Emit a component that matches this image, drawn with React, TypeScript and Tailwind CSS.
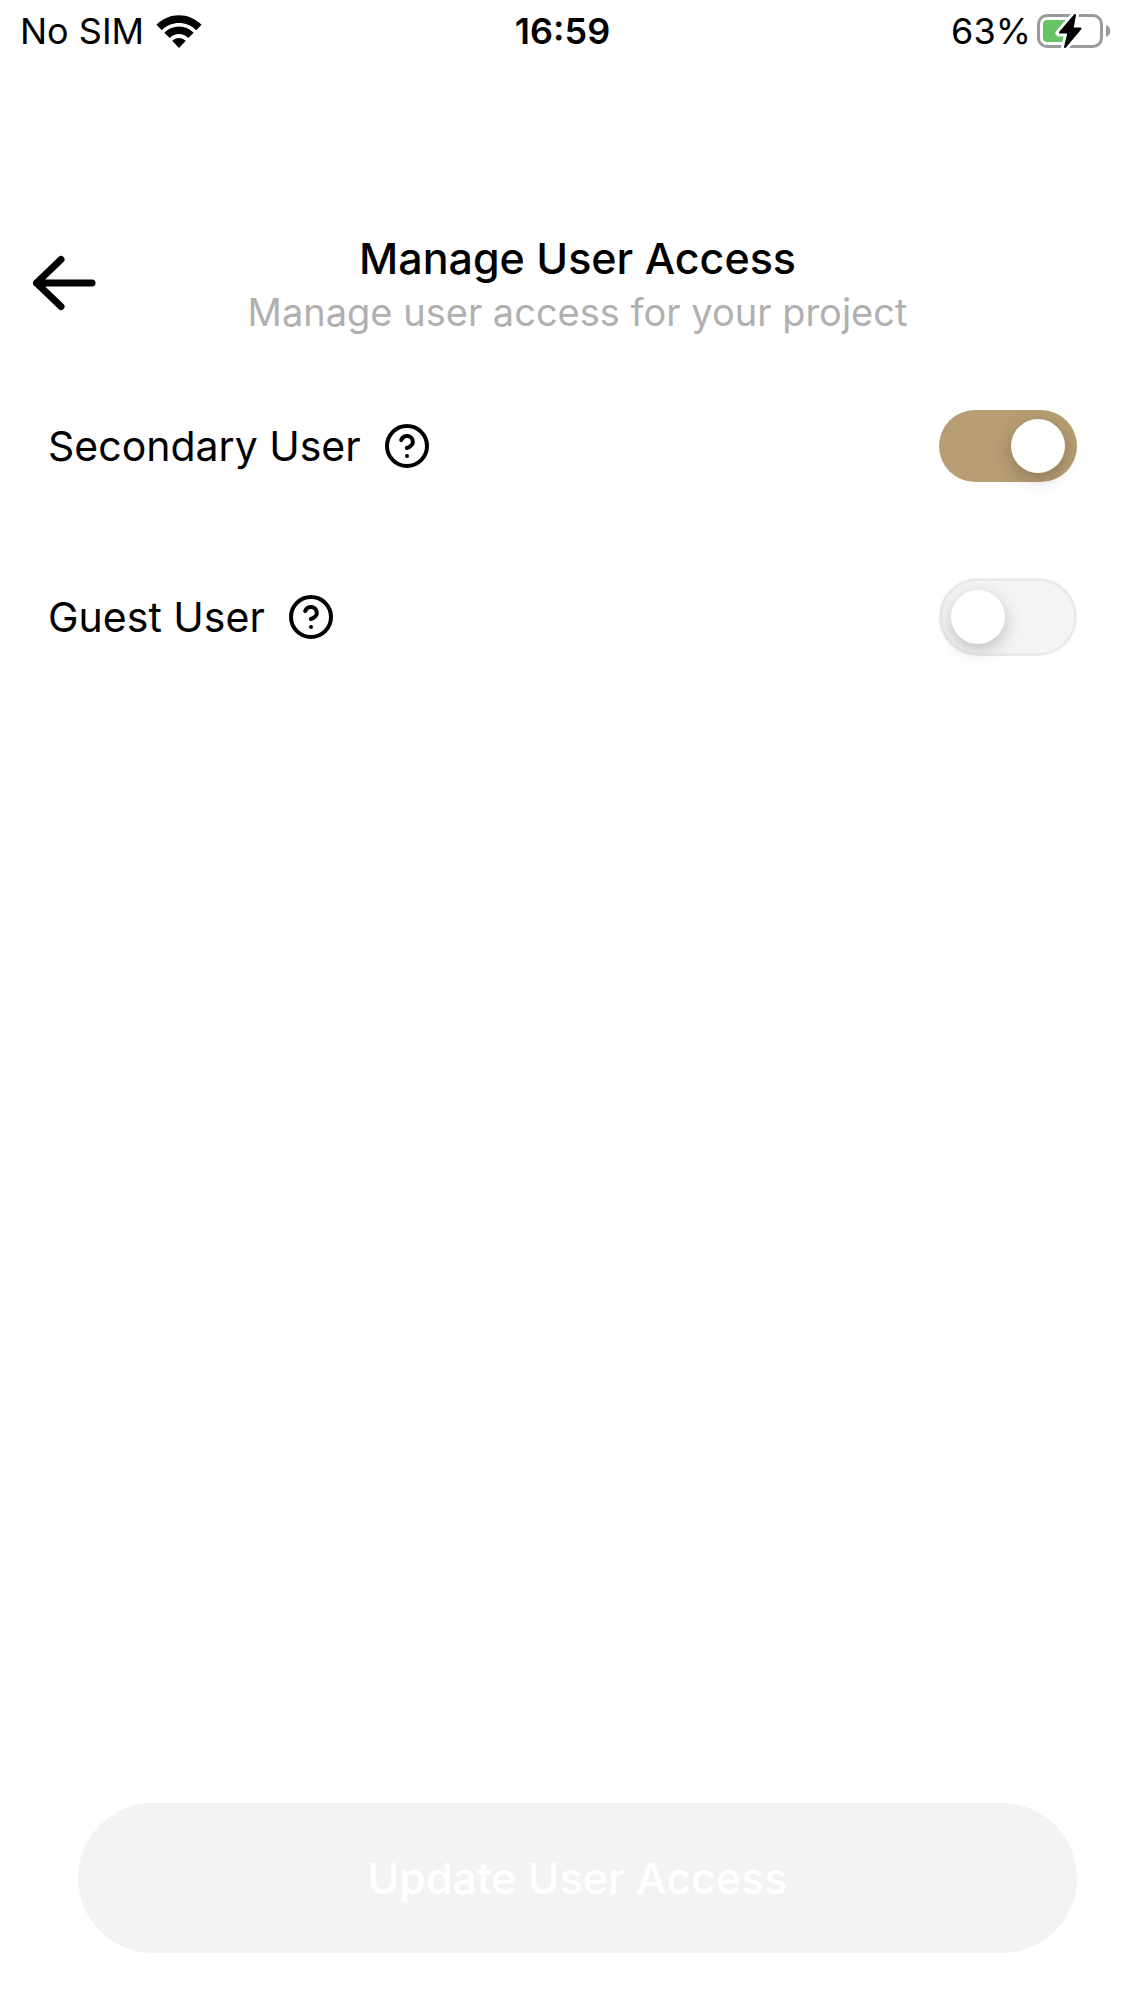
import { useState } from "react";
import { CircleQuestionMark } from "lucide-react";

function WifiIcon() {
  return (
    <svg viewBox="0 0 46 33" className="h-[33px] w-[46px]" aria-label="Wi-Fi" role="img">
      <path d="M0.5 9.8C12.8-3 33.2-3 45.5 9.8L40.2 15.2C30.7 5.6 15.3 5.6 5.8 15.2Z" fill="black" />
      <path d="M8.3 17.8C16.4 9.4 29.6 9.4 37.7 17.8L32.3 22.9C27.2 17.6 18.8 17.6 13.7 22.9Z" fill="black" />
      <path d="M16.2 25.8C20 21.9 26 21.9 29.8 25.8L23 33Z" fill="black" />
    </svg>
  );
}

function BatteryIcon() {
  return (
    <svg viewBox="0 0 74 36" className="h-9 w-[74px]" aria-label="Charging" role="img">
      <rect x="1.5" y="2.5" width="63" height="31" rx="8.5" fill="none" stroke="#9a9a9a" strokeWidth="3" />
      <path d="M69 12C72 13 73.3 15.5 73.3 18C73.3 20.5 72 23 69 24Z" fill="#9a9a9a" />
      <path d="M10 7H40V12L26 29H10C7.5 29 6 27.5 6 25V11C6 8.5 7.5 7 10 7Z" fill="#67c366" />
      <path d="M38.500 1L22 20H31L27.500 35L44.500 15.500H35.500Z" fill="white" stroke="white" strokeWidth="7" strokeLinejoin="round" />
      <path d="M38 2L23 19.500H31.500L28 34L43.500 15.500H35.500Z" fill="black" stroke="black" strokeWidth="2" strokeLinejoin="round" />
    </svg>
  );
}

function BackArrow() {
  return (
    <svg viewBox="0 0 64 56" className="h-14 w-16" fill="none" stroke="black" strokeWidth="7" strokeLinecap="round" strokeLinejoin="round" aria-hidden="true">
      <path d="M60 28H4.500M29 4.500L4.500 28L29 51.500" />
    </svg>
  );
}

type RowProps = {
  id: string;
  label: string;
  checked: boolean;
  onChange: (value: boolean) => void;
};

function AccessRow({ id, label, checked, onChange }: RowProps) {
  return (
    <li className="flex h-[78px] items-center justify-between">
      <div className="flex items-center gap-[22px]">
        <label htmlFor={id} className="text-[41px] leading-[52px]">
          {label}
        </label>
        <button type="button" aria-label={`About ${label}`}>
          <CircleQuestionMark className="size-12" strokeWidth={2} />
        </button>
      </div>
      <label
        className={
          checked
            ? "flex h-[72px] w-[138px] items-center justify-end rounded-full bg-[#b69d73] px-3"
            : "flex h-[78px] w-[138px] items-center rounded-full border-[3px] border-[#eaeaea] bg-[#f4f4f4] px-[9px]"
        }
      >
        <input
          id={id}
          type="checkbox"
          role="switch"
          className="sr-only"
          checked={checked}
          onChange={(e) => onChange(e.target.checked)}
        />
        <span className="size-[54px] rounded-full bg-white shadow-[0_6px_18px_rgba(0,0,0,0.22)]" />
      </label>
    </li>
  );
}

export default function App() {
  const [secondary, setSecondary] = useState(true);
  const [guest, setGuest] = useState(false);

  return (
    <div className="flex min-h-screen flex-col bg-white font-['Inter',sans-serif] text-black">
      <div className="grid h-[62px] grid-cols-3 items-center text-[36px] leading-[44px]">
        <div className="flex items-center gap-3 pl-5">
          <span>No SIM</span>
          <WifiIcon />
        </div>
        <span className="text-center font-semibold">16:59</span>
        <div className="flex items-center justify-end gap-1.5 pr-3.5">
          <span>63%</span>
          <BatteryIcon />
        </div>
      </div>

      <header className="mt-[167px] flex items-center pr-[66px] pl-8">
        <button type="button" aria-label="Back">
          <BackArrow />
        </button>
        <div className="flex-1 text-center">
          <h1 className="text-[43px] leading-[58px] font-medium">Manage User Access</h1>
          <p className="text-[38px] leading-[50px] text-[#b0b0b0]">Manage user access for your project</p>
        </div>
      </header>

      <main className="flex flex-1 flex-col pr-12 pb-12">
        <ul className="mt-[70px] flex flex-col gap-[93px] pl-12">
          <AccessRow id="secondary-user" label="Secondary User" checked={secondary} onChange={setSecondary} />
          <AccessRow id="guest-user" label="Guest User" checked={guest} onChange={setGuest} />
        </ul>
        <button
          type="button"
          className="mt-auto ml-[78px] h-[150px] rounded-full bg-[#f3f3f3] text-[43px] leading-[58px] font-medium text-white"
        >
          Update User Access
        </button>
      </main>
    </div>
  );
}
